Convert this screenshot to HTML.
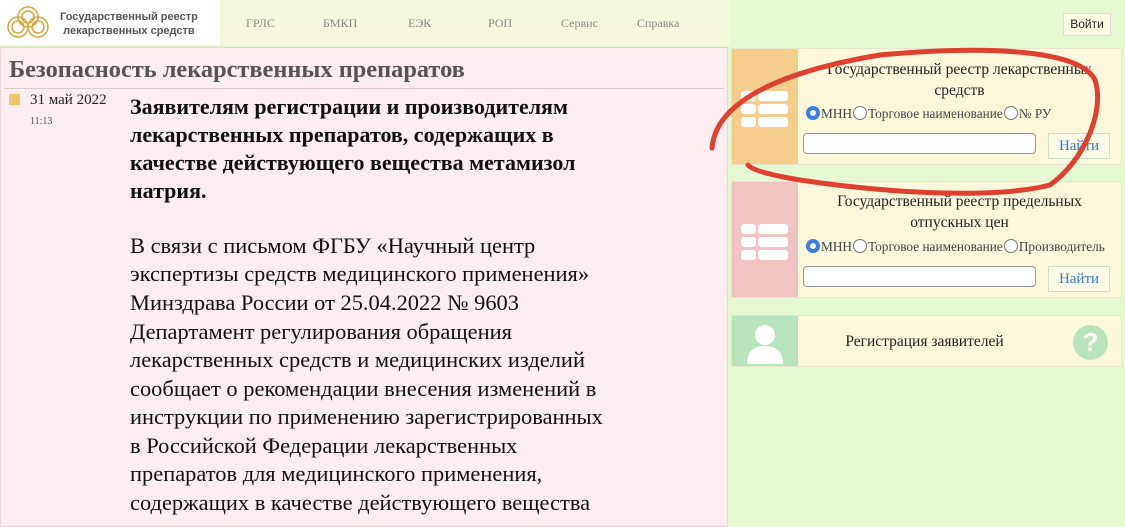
<!DOCTYPE html>
<html><head><meta charset="utf-8">
<style>
*{margin:0;padding:0;box-sizing:border-box}
body{width:1125px;height:518px;overflow:hidden;background:#e6f8d2;font-family:"Liberation Serif",serif;position:relative}
.hdr{position:absolute;left:0;top:0;width:730px;height:45px;background:#f5f8dc}
.logo{position:absolute;left:0;top:0;width:220px;height:45px;background:#fff}
.logo .t{position:absolute;left:60px;top:10px;font:bold 11px/14px "Liberation Sans",sans-serif;color:#555;text-align:center}
.nav{position:absolute;top:16px;font-size:12px;color:#888}
.left{position:absolute;left:0;top:47px;width:728px;height:480px;background:#fcedf0;border:1px solid #ebd3d6}
.title{position:absolute;left:9px;top:57px;font-size:24px;font-weight:bold;color:#555;white-space:nowrap;transform:scaleX(1.015);transform-origin:left}
.hl{position:absolute;left:4px;top:88px;width:720px;height:1px;background:#e2c9cb}
.ln{position:absolute;left:130px;white-space:nowrap;font-size:22px;color:#111;transform:scaleX(1.02);transform-origin:left}
.b{font-weight:bold;transform:scaleX(1.0)}
.card{position:absolute;left:731px;width:391px;background:#fbf8dc;border:1px solid #e6e6c8}
.ib{position:absolute;left:0;top:0;width:66px;height:100%}
.ct{position:absolute;left:66px;right:0;text-align:center;font-size:15.5px;color:#222;line-height:21px}
.radio{position:absolute;font-size:13.3px;color:#444;white-space:nowrap}
.rb{display:inline-block;width:14px;height:14px;border-radius:50%;border:1px solid #777;vertical-align:-2px;background:#fff;margin:0 1px}
.rb.on{border:4px solid #3b7de0}
.inp{position:absolute;left:803px;width:233px;height:21px;border:1px solid #999;border-radius:4px;background:#fff}
.btn{position:absolute;left:1048px;width:62px;height:26px;border:1px solid #cfe0c8;background:#fbfbe8;color:#3a78c8;font-size:15px;text-align:center;line-height:24px}
.lines{position:absolute;left:9px;width:46px}
.lines i{position:absolute;background:#fff;border-radius:3px;height:10px}
</style></head><body>
<div class="hdr"></div>
<div class="logo">
<svg width="56" height="45" style="position:absolute;left:4px;top:0" fill="none" stroke="#d4a93a" stroke-width="1.5"><circle cx="24" cy="17" r="10"/><circle cx="24" cy="17" r="6"/><circle cx="14" cy="27" r="10"/><circle cx="14" cy="27" r="6"/><circle cx="34" cy="27" r="10"/><circle cx="34" cy="27" r="6"/></svg>
<div class="t">Государственный реестр<br>лекарственных средств</div>
</div>
<div class="nav" style="left:246px">ГРЛС</div>
<div class="nav" style="left:323px">БМКП</div>
<div class="nav" style="left:408px">ЕЭК</div>
<div class="nav" style="left:488px">РОП</div>
<div class="nav" style="left:561px">Сервис</div>
<div class="nav" style="left:637px">Справка</div>
<div style="position:absolute;left:1063px;top:13px;width:48px;height:23px;border:1px solid #ddd;background:#fdfbe6;font:12px/21px 'Liberation Sans',sans-serif;text-align:center;color:#222">Войти</div>

<div class="left"></div>
<div class="title">Безопасность лекарственных препаратов</div>
<div class="hl"></div>
<div style="position:absolute;left:9px;top:94px;width:11px;height:11px;background:#edc76a"></div>
<div style="position:absolute;left:30px;top:92px;font-size:15px;color:#222">31 май 2022</div>
<div style="position:absolute;left:30px;top:116px;font-size:10px;color:#555">11:13</div>
<div class="ln b" style="top:94px">Заявителям регистрации и производителям</div>
<div class="ln b" style="top:122px">лекарственных препаратов, содержащих в</div>
<div class="ln b" style="top:150px">качестве действующего вещества метамизол</div>
<div class="ln b" style="top:178px">натрия.</div>
<div class="ln" style="top:233px">В связи с письмом ФГБУ «Научный центр</div>
<div class="ln" style="top:261px">экспертизы средств медицинского применения»</div>
<div class="ln" style="top:290px">Минздрава России от 25.04.2022 № 9603</div>
<div class="ln" style="top:319px">Департамент регулирования обращения</div>
<div class="ln" style="top:347px">лекарственных средств и медицинских изделий</div>
<div class="ln" style="top:376px">сообщает о рекомендации внесения изменений в</div>
<div class="ln" style="top:404px">инструкции по применению зарегистрированных</div>
<div class="ln" style="top:433px">в Российской Федерации лекарственных</div>
<div class="ln" style="top:461px">препаратов для медицинского применения,</div>
<div class="ln" style="top:490px">содержащих в качестве действующего вещества</div>

<div class="card" style="top:48px;height:117px">
<div class="ib" style="background:#f5cd8c"><div class="lines" style="top:42px"><i style="left:0;top:0;width:15px"></i><i style="left:17px;top:0;width:30px"></i><i style="left:0;top:13px;width:15px"></i><i style="left:17px;top:13px;width:30px"></i><i style="left:0;top:26px;width:15px"></i><i style="left:17px;top:26px;width:30px"></i></div></div>
<div class="ct" style="top:10px">Государственный реестр лекарственных<br>средств</div>
</div>
<div class="radio" style="left:805px;top:106px"><span class="rb on"></span>МНН<span class="rb"></span>Торговое наименование<span class="rb"></span>№ РУ</div>
<div class="inp" style="top:133px"></div>
<div class="btn" style="top:133px">Найти</div>

<div class="card" style="top:181px;height:117px">
<div class="ib" style="background:#f1c3c3"><div class="lines" style="top:42px"><i style="left:0;top:0;width:15px"></i><i style="left:17px;top:0;width:30px"></i><i style="left:0;top:13px;width:15px"></i><i style="left:17px;top:13px;width:30px"></i><i style="left:0;top:26px;width:15px"></i><i style="left:17px;top:26px;width:30px"></i></div></div>
<div class="ct" style="top:9px">Государственный реестр предельных<br>отпускных цен</div>
</div>
<div class="radio" style="left:805px;top:239px"><span class="rb on"></span>МНН<span class="rb"></span>Торговое наименование<span class="rb"></span>Производитель</div>
<div class="inp" style="top:266px"></div>
<div class="btn" style="top:266px">Найти</div>

<div class="card" style="top:315px;height:52px">
<div class="ib" style="background:#b8e4bd"><svg width="66" height="52"><circle cx="33" cy="19" r="10" fill="#fff"/><path d="M15 48 Q15 30 33 30 Q51 30 51 48 Z" fill="#fff"/></svg></div>
<div class="ct" style="top:15px;left:66px;right:70px">Регистрация заявителей</div>
<div style="position:absolute;left:341px;top:9px;width:35px;height:35px;border-radius:50%;background:#b8e4bd;color:#fff;font:bold 26px/35px 'Liberation Sans',sans-serif;text-align:center">?</div>
</div>

<svg width="1125" height="518" style="position:absolute;left:0;top:0" fill="none">
<path d="M712 148 C715 110 760 75 880 55 C990 45 1080 50 1095 80 C1105 110 1085 160 1050 185 C1000 198 900 195 800 180 C770 175 752 170 748 165" stroke="#e0402f" stroke-width="5" stroke-linecap="round"/>
</svg>
</body></html>
